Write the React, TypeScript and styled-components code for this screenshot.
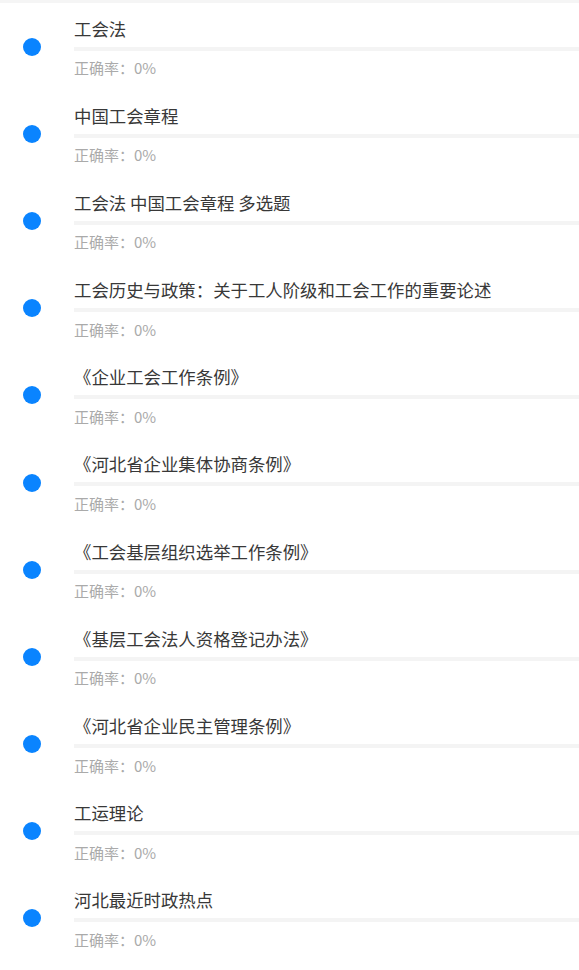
import React from 'react'
import styled, { createGlobalStyle } from 'styled-components'

const GlobalStyle = createGlobalStyle`
  html, body {
    margin: 0;
    padding: 0;
    background: #ffffff;
    font-family: "Noto Sans CJK SC", "Noto Sans", sans-serif;
  }
`

const Page = styled.div`
  display: flex;
  flex-direction: column;
  width: 100%;
  border-top: 3px solid #f5f5f5;
  background: #ffffff;
`

const Row = styled.div`
  display: flex;
  flex-direction: row;
  align-items: center;
  height: 87.2px;
  box-sizing: border-box;
`

const Dot = styled.span`
  flex: none;
  width: 18px;
  height: 18px;
  border-radius: 50%;
  background: #0a84ff;
  margin-left: 23px;
  margin-right: 33px;
`

const Body = styled.div`
  display: flex;
  flex-direction: column;
  flex: 1;
  min-width: 0;
  padding: 13.5px 0 12.2px 0;
`

const Title = styled.div`
  font-size: 17.4px;
  line-height: 24px;
  color: #383838;
  white-space: nowrap;
`

const Bar = styled.div`
  height: 4px;
  margin-top: 6px;
  background: #f4f4f4;
`

const Rate = styled.div`
  margin-top: 7.5px;
  font-size: 15px;
  line-height: 20px;
  color: #aaaaaa;
`

const chapters = [
  '工会法',
  '中国工会章程',
  '工会法 中国工会章程 多选题',
  '工会历史与政策：关于工人阶级和工会工作的重要论述',
  '《企业工会工作条例》',
  '《河北省企业集体协商条例》',
  '《工会基层组织选举工作条例》',
  '《基层工会法人资格登记办法》',
  '《河北省企业民主管理条例》',
  '工运理论',
  '河北最近时政热点',
]

function App() {
  return (
    <>
      <GlobalStyle />
      <Page>
        {chapters.map((name) => (
          <Row key={name}>
            <Dot />
            <Body>
              <Title>{name}</Title>
              <Bar />
              <Rate>正确率：0%</Rate>
            </Body>
          </Row>
        ))}
      </Page>
    </>
  )
}

export default App
